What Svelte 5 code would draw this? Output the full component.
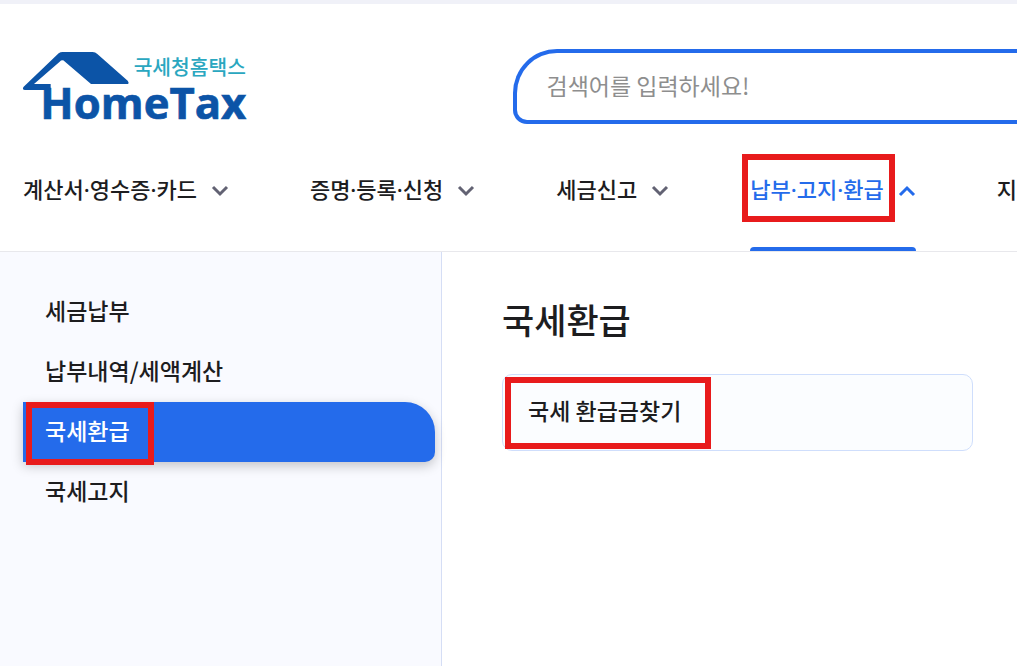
<script>
    let activeTab = $state('납부·고지·환급');
    let activeMenu = $state('국세환급');
    let keyword = $state('');

    const tabs = ['계산서·영수증·카드', '증명·등록·신청', '세금신고', '납부·고지·환급', '지급명세·자료'];
    const menus = ['세금납부', '납부내역/세액계산', '국세환급', '국세고지'];
</script>

<div class="page">
    <header>
        <div class="header-top">
            <a class="logo" href="#home" aria-label="국세청홈택스 HomeTax">
                <svg viewBox="39 36 669 210" aria-hidden="true">
                    <path
                        fill="#0c54a7"
                        d="M146 40Q151 36 158 36H248Q256 36 262 42L353 122Q360 132 350 132H243L165 65Q157 57 149 65L72 132H122V150H45Q35 149 41 140Z"
                    />
                    <text class="logo-sub" x="371" y="106">국세청홈택스</text>
                    <text class="logo-name" x="91" y="237">HomeTax</text>
                </svg>
            </a>
            <input class="search" type="text" aria-label="검색어" placeholder="검색어를 입력하세요!" bind:value={keyword} />
        </div>

        <nav class="tabs">
            {#each tabs as tab}
                <button class="tab" class:active={tab === activeTab} onclick={() => (activeTab = tab)}>
                    <span class="tab-label" class:marked={tab === '납부·고지·환급'}>{tab}</span>
                    <svg class="chevron" viewBox="0 0 18 12" aria-hidden="true">
                        <path d="M2 2L9 9L16 2" fill="none" stroke="currentColor" stroke-width="3" />
                    </svg>
                </button>
            {/each}
        </nav>
    </header>

    <div class="body">
        <aside>
            {#each menus as menu}
                <button class="menu" class:active={menu === activeMenu} onclick={() => (activeMenu = menu)}>
                    <span class:marked={menu === '국세환급'}>{menu}</span>
                </button>
            {/each}
        </aside>

        <main>
            <h1>{activeMenu}</h1>
            <a class="card" href="#refund"><span class="marked">국세 환급금찾기</span></a>
        </main>
    </div>
</div>

<style>
    :global(body) {
        background: #fff;
    }

    .page {
        min-height: 100vh;
        box-sizing: border-box;
        display: flex;
        flex-direction: column;
        overflow: hidden;
        border-top: 4px solid #f0f1f8;
        color: #1d1d1f;
        font-family: "Noto Sans CJK KR", sans-serif;
        font-weight: 500;
    }

    button {
        padding: 0;
        border: 0;
        background: none;
        color: inherit;
        font: inherit;
        cursor: pointer;
    }

    header {
        border-bottom: 1px solid #e8e8ec;
    }

    .header-top {
        display: flex;
        align-items: center;
        justify-content: space-between;
        padding-top: 45px;
    }

    .logo {
        display: block;
        width: 223px;
        padding-left: 23px;
    }

    .logo svg {
        display: block;
        width: 100%;
        overflow: visible;
    }

    .logo-sub {
        fill: #2aa7c0;
        font-size: 61px;
    }

    .logo-name {
        fill: #0c54a7;
        stroke: #0c54a7;
        stroke-width: 2px;
        font-family: "Open Sans", sans-serif;
        font-size: 131px;
        font-weight: 700;
    }

    .search {
        flex: 0 0 50%;
        height: 75px;
        box-sizing: border-box;
        margin-right: -4px;
        padding: 0 30px 4px;
        border: 4px solid #246beb;
        border-right: 0;
        border-radius: 44px 0 0 14px;
        outline: none;
        background: #fff;
        color: #1d1d1f;
        font-family: inherit;
        font-size: 23px;
    }

    .search::placeholder {
        color: #8e8e8e;
        opacity: 1;
    }

    .tabs {
        display: flex;
        gap: 81px;
        padding-left: 23px;
    }

    /* Noto Sans first: its middle dot is narrower than the CJK one */
    .tab {
        position: relative;
        display: flex;
        flex: none;
        align-items: center;
        gap: 14px;
        height: 127px;
        font-family: "Noto Sans", "Noto Sans CJK KR", sans-serif;
        font-size: 22px;
        white-space: nowrap;
    }

    .tab.active {
        color: #246beb;
    }

    .tab.active::after {
        content: "";
        position: absolute;
        right: 0;
        bottom: 0;
        left: 0;
        height: 4px;
        border-radius: 4px 4px 0 0;
        background: #246beb;
    }

    .chevron {
        width: 18px;
        height: 12px;
        margin-top: 6px;
        color: #626273;
    }

    .active .chevron {
        color: #246beb;
        transform: rotate(180deg);
    }

    .marked {
        position: relative;
    }

    /* red guide frame around the step to click */
    .marked::after {
        content: "";
        position: absolute;
        inset: -18px -11px -18px -8px;
        border: 6px solid #e81b1c;
    }

    .body {
        display: grid;
        grid-template-columns: 442px 1fr;
        flex: 1;
    }

    aside {
        display: flex;
        flex-direction: column;
        padding: 30px 6px 30px 23px;
        border-right: 1px solid #d5def5;
        background: #f9faff;
    }

    .menu {
        height: 60px;
        padding: 0 22px 4px;
        font-size: 23px;
        text-align: left;
    }

    .menu.active {
        border-radius: 0 30px 10px 0;
        background: #246beb;
        box-shadow: 0 4px 12px rgba(0, 0, 0, 0.22);
        color: #fff;
    }

    .menu .marked::after {
        inset: -11px -24px -18px -19px;
    }

    main {
        padding: 40px 44px 40px 60px;
    }

    h1 {
        margin: 0 0 28px;
        font-size: 35px;
        font-weight: 500;
        line-height: 54px;
    }

    .card {
        display: flex;
        align-items: center;
        height: 69px;
        padding: 0 25px 6px;
        border: 1px solid #cfdefc;
        border-radius: 10px;
        background: #fbfdff;
        color: inherit;
        font-size: 23px;
        text-decoration: none;
    }

    .card .marked::after {
        inset: -16px -30px -22px -23px;
    }
</style>
